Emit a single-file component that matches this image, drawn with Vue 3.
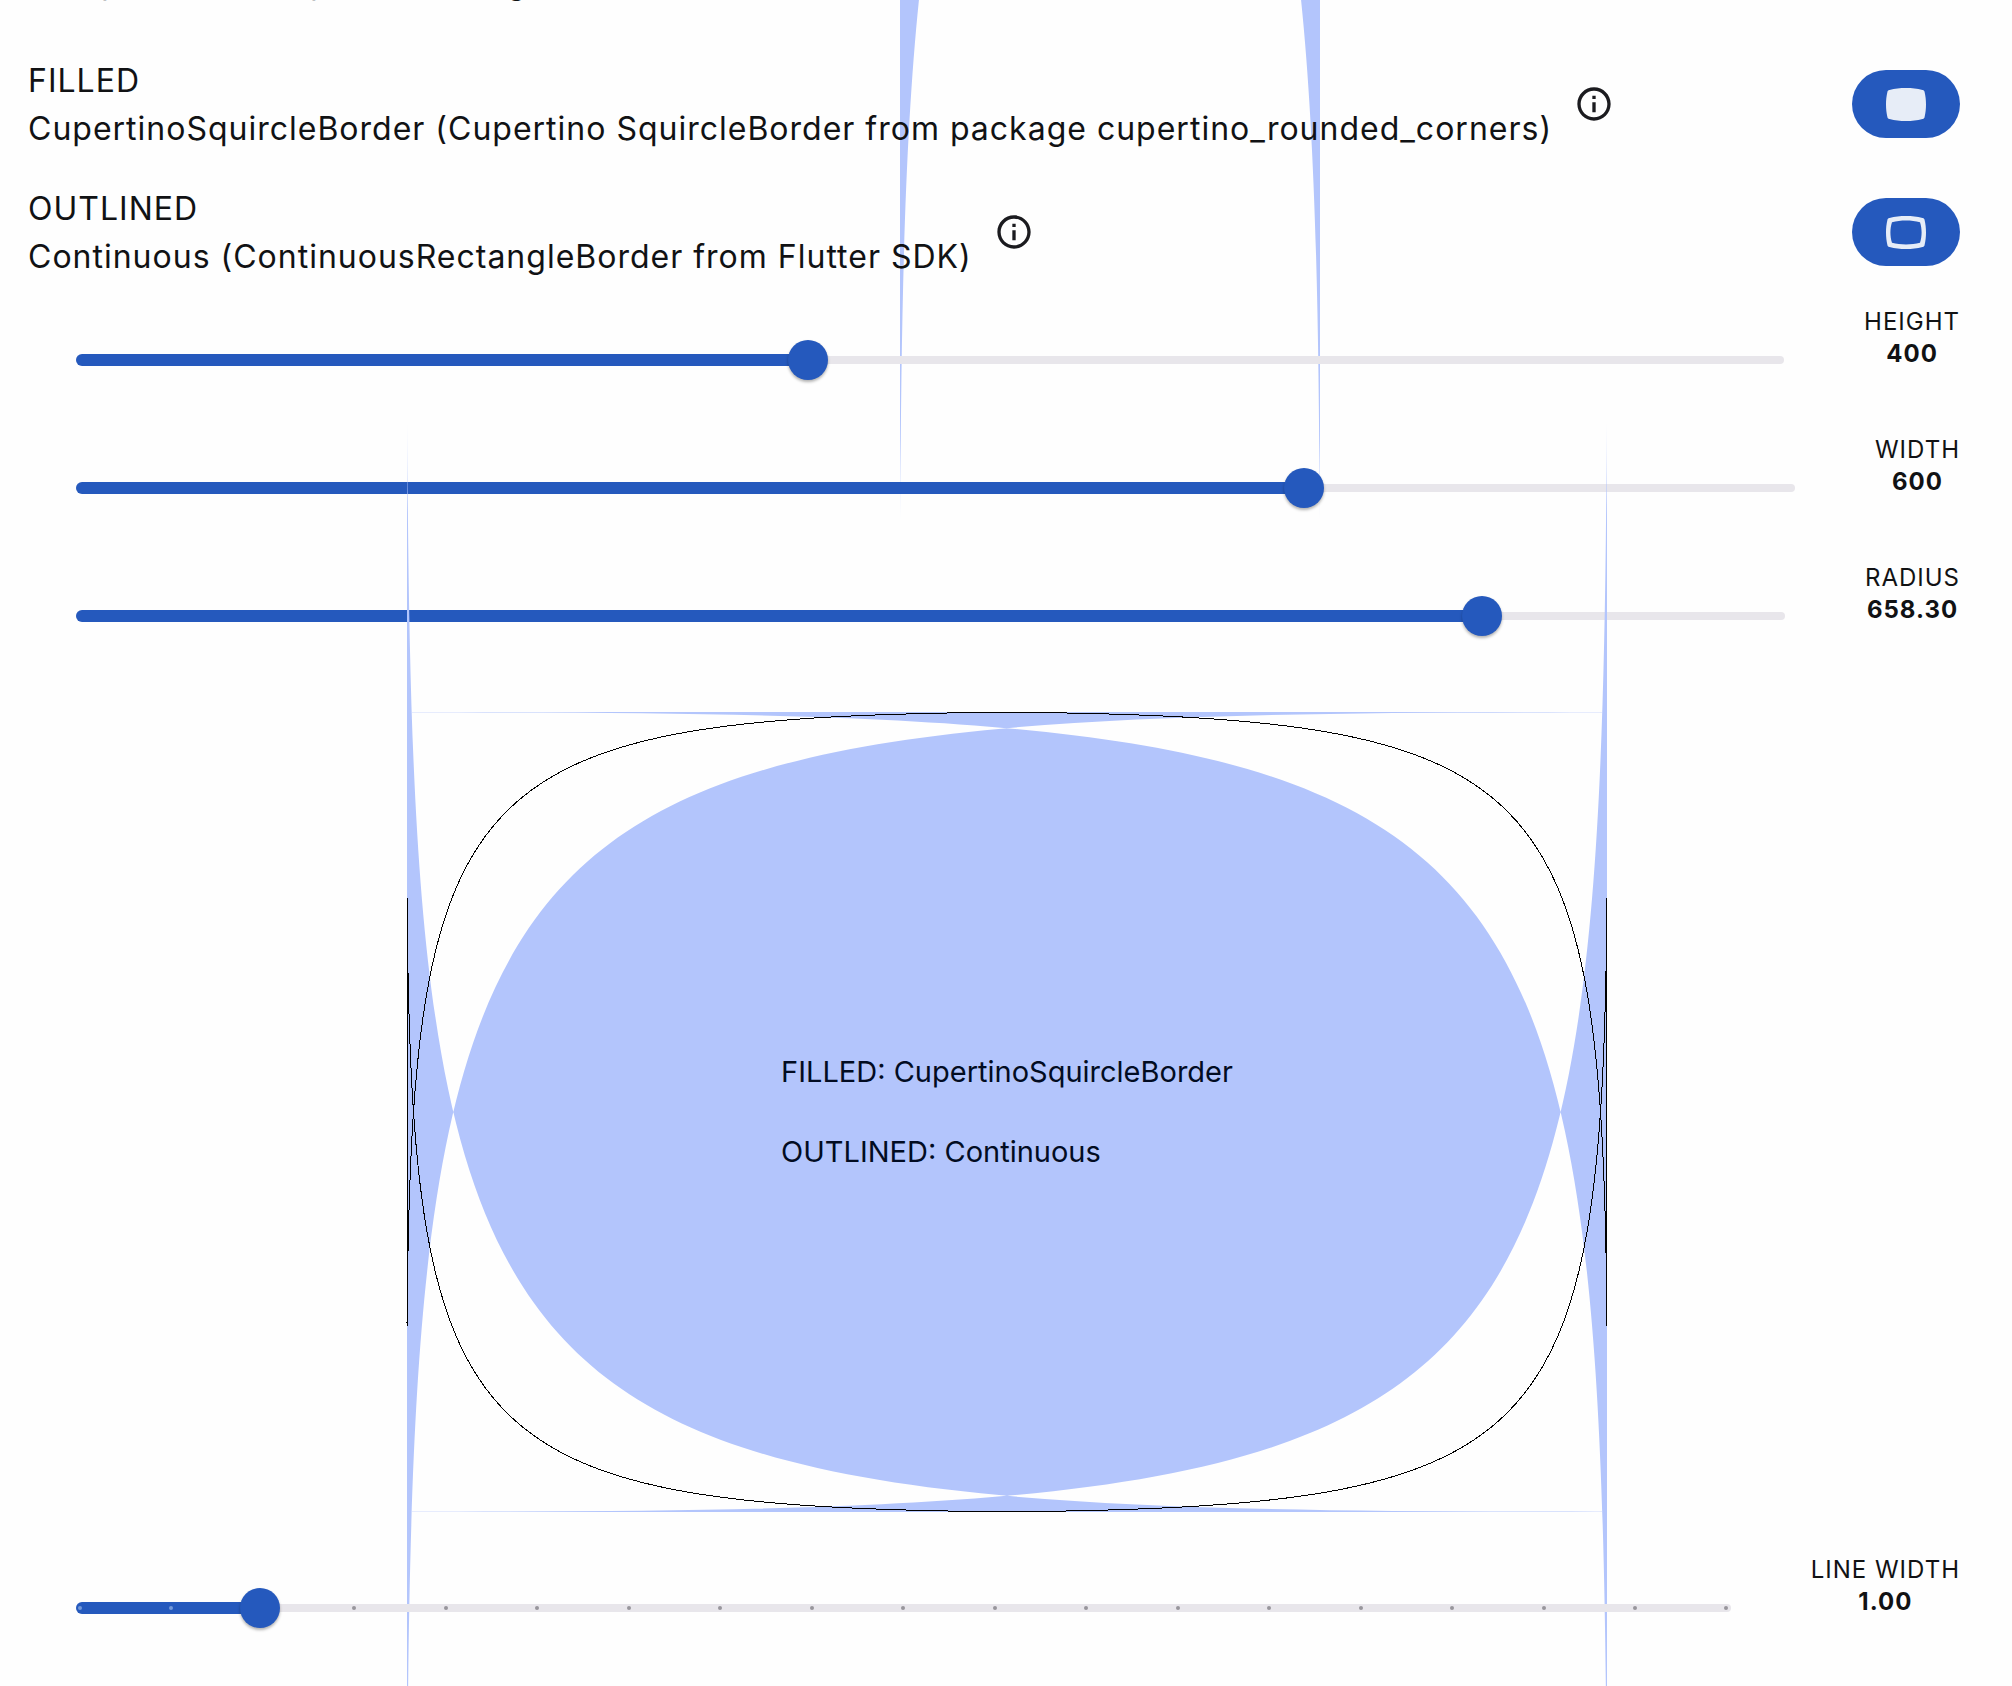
<script setup>
import { ref, computed } from 'vue'

const height = ref(400)
const width = ref(600)
const radius = ref(658.3)
const lineWidth = ref(1)

const shapes = [
  {
    id: 'filled',
    title: 'FILLED',
    text: 'CupertinoSquircleBorder (Cupertino SquircleBorder from package cupertino_rounded_corners)',
  },
  {
    id: 'outlined',
    title: 'OUTLINED',
    text: 'Continuous (ContinuousRectangleBorder from Flutter SDK)',
  },
]

const sizeSliders = [
  { id: 'height', label: 'HEIGHT', model: height, min: 100, max: 800, step: 1, digits: 0 },
  { id: 'width', label: 'WIDTH', model: width, min: 100, max: 800, step: 1, digits: 0 },
  { id: 'radius', label: 'RADIUS', model: radius, min: 0, max: 800, step: 0.1, digits: 2 },
]
const lineSlider = { id: 'line', label: 'LINE WIDTH', model: lineWidth, min: 0, max: 9, step: 0.5, digits: 2 }
const ticks = 19

const percent = (s) => ((s.model.value - s.min) / (s.max - s.min)) * 100 + '%'

// Two drawing units for each logical pixel.
const w = computed(() => width.value * 2)
const h = computed(() => height.value * 2)
const r = computed(() => radius.value * 2)

// Unclamped corners: a large radius makes the curves cross past the edges.
const fillPath = computed(() => {
  const W = w.value
  const H = h.value
  const R = r.value
  return `M0 ${R}C0 0 0 0 ${R} 0L${W - R} 0C${W} 0 ${W} 0 ${W} ${R}L${W} ${H - R}` +
    `C${W} ${H} ${W} ${H} ${W - R} ${H}L${R} ${H}C0 ${H} 0 ${H} 0 ${H - R}Z`
})

// Corner radius limited to the shortest side; ends that run along an edge are trimmed.
const outlinePath = computed(() => {
  const W = w.value
  const H = h.value
  const R = Math.min(W, H, r.value)
  const a = Math.cbrt(0.5 / R)
  const b = 1 - a
  const p = [a * a * a, a * a * b, a * b * b, b * b * b].map((v) => v * R)
  const corner = (fx, fy) =>
    'M' + [0, 1, 2, 3].map((i) => `${(i === 1 ? 'C' : '') + fx(p[i])} ${fy(p[3 - i])}`).join(' ')
  const near = (v) => v - 0.5
  const right = (v) => W - v + 0.5
  const bottom = (v) => H - v + 0.5
  const e = p[3]
  return [
    corner(near, near),
    corner(right, near),
    corner(near, bottom),
    corner(right, bottom),
    `M.5 ${H - e - 2}V${e + 2}M${W - 0.5} ${H - e - 2}V${e + 2}`,
    `M${W - e - 2} .5H${e + 2}M${W - e - 2} ${H - 0.5}H${e + 2}`,
  ].join('')
})
</script>

<template>
  <main class="page">
    <svg class="previous" viewBox="0 0 420 746" aria-hidden="true">
      <defs>
        <linearGradient id="previous-fade" gradientUnits="userSpaceOnUse" x1="0" y1="440" x2="0" y2="520">
          <stop offset="0" stop-color="#b3c5fc" />
          <stop offset="1" stop-color="#b3c5fc" stop-opacity="0" />
        </linearGradient>
      </defs>
      <path d="M0 746C0 -571 0 -571 1317 -571H0Z" />
      <path d="M420 746C420 -571 420 -571 -897 -571H420Z" />
    </svg>

    <p class="cut"><span>p</span><span>p</span><span>g</span></p>

    <section v-for="s in shapes" :key="s.id" class="row">
      <div class="names">
        <h2>{{ s.title }}</h2>
        <p>{{ s.text }}</p>
      </div>
      <button class="info" type="button" :aria-label="'About ' + s.title">
        <svg viewBox="0 0 24 24"><path d="M11 7h2v2h-2zm0 4h2v6h-2zm1-9C6.480 2 2 6.480 2 12s4.480 10 10 10 10-4.480 10-10S17.520 2 12 2zm0 18c-4.410 0-8-3.590-8-8s3.590-8 8-8 8 3.590 8 8-3.590 8-8 8z" /></svg>
      </button>
      <button class="pick" type="button" :aria-label="'Choose shape, ' + s.title">
        <svg viewBox="0 0 40 33">
          <path
            fill-rule="evenodd"
            :d="'M3.500 2C9 .6 14 0 20 0S31 .6 36.500 2C38 2.300 38.400 2.800 38.600 4C39.500 8 40 12 40 16.500S39.500 25 38.600 29C38.400 30.200 38 30.700 36.500 31C31 32.400 26 33 20 33S9 32.400 3.500 31C2 30.700 1.600 30.200 1.400 29C.5 25 0 21 0 16.500S.5 8 1.400 4C1.600 2.800 2 2.300 3.500 2Z' + (s.id === 'outlined' ? 'M6 6.200C4.900 9.500 4.400 13 4.400 16.500S4.900 23.500 6 26.800C10.500 27.900 15 28.400 20 28.400S29.500 27.900 34 26.800C35.100 23.500 35.600 20 35.600 16.500S35.100 9.500 34 6.200C29.500 5.100 25 4.600 20 4.600S10.500 5.100 6 6.200Z' : '')"
          />
        </svg>
      </button>
    </section>

    <section v-for="s in sizeSliders" :key="s.id" class="row">
      <div class="slider">
        <span class="track"></span>
        <span class="active" :style="{ width: percent(s) }"></span>
        <input :id="s.id" v-model.number="s.model.value" type="range" :min="s.min" :max="s.max" :step="s.step" />
      </div>
      <label class="value" :for="s.id">{{ s.label }}<b>{{ s.model.value.toFixed(s.digits) }}</b></label>
    </section>

    <figure class="preview">
      <svg :width="w" :height="h" :viewBox="`0 0 ${w} ${h}`" aria-hidden="true">
        <defs>
          <linearGradient id="fill-fade" gradientUnits="userSpaceOnUse" x1="0" y1="-290" x2="0" y2="-200">
            <stop offset="0" stop-color="#b3c5fc" stop-opacity="0" />
            <stop offset="1" stop-color="#b3c5fc" />
          </linearGradient>
        </defs>
        <path class="fill" :d="fillPath" />
        <path class="edge" :d="`M5 .5H${w - 5}M5 ${h - 0.5}H${w - 5}`" />
        <path class="outline" :d="outlinePath" />
      </svg>
      <figcaption>
        <span>FILLED: CupertinoSquircleBorder</span>
        <span>OUTLINED: Continuous</span>
      </figcaption>
    </figure>

    <section class="row">
      <div class="slider">
        <span class="track"></span>
        <span class="active" :style="{ width: percent(lineSlider) }"></span>
        <span class="ticks"><i v-for="n in ticks" :key="n" :class="{ on: (n - 1) / 2 <= lineWidth }"></i></span>
        <input :id="lineSlider.id" v-model.number="lineWidth" type="range" :min="lineSlider.min" :max="lineSlider.max" :step="lineSlider.step" />
      </div>
      <label class="value" :for="lineSlider.id">{{ lineSlider.label }}<b>{{ lineWidth.toFixed(2) }}</b></label>
    </section>
  </main>
</template>

<style>
body {
  margin: 0;
  background: #fefefe;
}
</style>

<style scoped>
.page {
  position: relative;
  box-sizing: border-box;
  min-height: 100vh;
  padding: 0 26px 0 28px;
  overflow: hidden;
  font-family: Inter, "Liberation Sans", sans-serif;
  font-size: 32px;
  color: #111214;
}
.previous {
  position: absolute;
  top: 0;
  left: calc(50% - 106px);
  width: 420px;
  height: 746px;
  fill: url(#previous-fade);
}
.cut {
  display: grid;
  grid-template-columns: 209px 197px auto;
  height: 40px;
  margin: 0;
  padding-left: 73px;
  line-height: 0;
}
.cut span {
  margin-top: -17px;
}
.row {
  position: relative;
  display: flex;
  align-items: center;
  height: 128px;
  padding-right: 26px;
}
.names {
  padding-top: 2px;
  line-height: 48px;
  letter-spacing: 1px;
}
.names h2,
.names p {
  margin: 0;
  font-size: 32px;
  font-weight: 400;
}
button {
  padding: 0;
  border: 0;
  background: none;
  cursor: pointer;
}
.info {
  width: 40px;
  height: 40px;
  margin-left: 22px;
}
.info svg {
  display: block;
  fill: #1b1b1f;
}
.pick {
  display: flex;
  align-items: center;
  justify-content: center;
  width: 108px;
  height: 68px;
  margin-left: auto;
  border-radius: 34px;
  background: #2559bd;
}
.pick svg {
  width: 40px;
  height: 33px;
  fill: #e7edf7;
}
.slider {
  display: grid;
  flex: 1;
  align-items: center;
  margin: 0 80px 0 48px;
}
.slider > * {
  grid-area: 1 / 1;
}
.track {
  height: 8px;
  border-radius: 4px;
  background: #e8e6eb;
}
.active {
  height: 12px;
  border-radius: 6px;
  background: #2559bd;
}
.ticks {
  display: flex;
  justify-content: space-between;
  padding: 0 2px;
}
.ticks i {
  width: 4px;
  height: 4px;
  border-radius: 2px;
  background: #98969c;
}
.ticks .on {
  background: #7399da;
}
input {
  height: 40px;
  margin: 0 -20px;
  background: none;
  appearance: none;
}
input::-webkit-slider-thumb {
  width: 40px;
  height: 40px;
  border-radius: 20px;
  background: #2559bd;
  box-shadow: 0 2px 3px rgba(0, 0, 0, 0.3);
  appearance: none;
}
.value {
  display: flex;
  flex-direction: column;
  align-items: center;
  align-self: flex-start;
  padding-top: 10px;
  font-size: 24px;
  line-height: 32px;
  letter-spacing: 1px;
}
.preview {
  position: relative;
  display: grid;
  place-items: center;
  margin: 32px 0;
}
.preview > * {
  grid-area: 1 / 1;
}
.preview svg {
  overflow: visible;
  pointer-events: none;
}
.fill {
  fill: url(#fill-fade);
}
.edge {
  stroke: #b3c5fc;
  opacity: 0.3;
}
.outline {
  fill: none;
  stroke: #000;
  shape-rendering: crispEdges;
}
figcaption {
  display: flex;
  flex-direction: column;
  gap: 40px;
  font-size: 29px;
  line-height: 40px;
  color: #020c22;
}
</style>
